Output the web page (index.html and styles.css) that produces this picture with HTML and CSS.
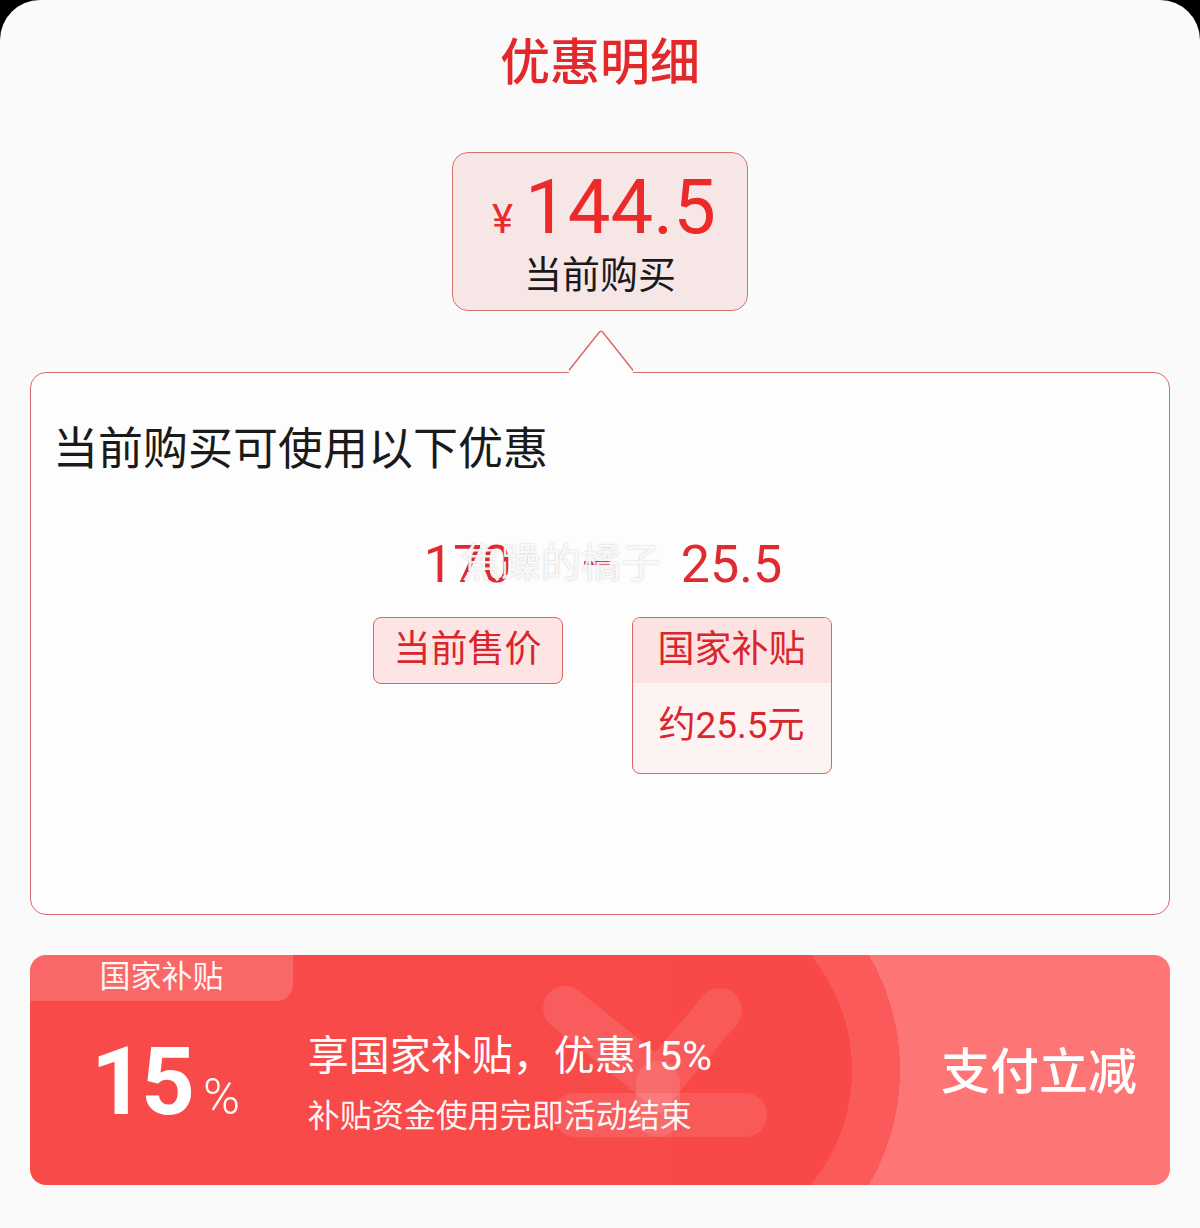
FILE: index.html
```html
<!DOCTYPE html>
<html lang="zh-CN">
<head>
    <meta charset="UTF-8">
    <meta name="viewport" content="width=device-width, initial-scale=1.0">
    <title>优惠明细</title>
    <link rel="stylesheet" href="styles.css">
</head>
<body>

    <div class="sheet">
        <h1 class="title">优惠明细</h1>

        <div class="price-box">
            <div class="price"><span class="yen">¥</span><span class="amount">144.5</span></div>
            <div class="price-label">当前购买</div>
        </div>

        <div class="detail-card">
            <svg class="pointer" width="64" height="46" viewBox="0 0 64 46">
                <path d="M0 42 L30 2.5 Q32 0 34 2.5 L64 42 L64 45 L0 45 Z" fill="#fdfdfd"/>
                <path d="M-2 42.75 L30 2.5 Q32 0 34 2.5 L66 42.75" fill="none" stroke="#d86c6c" stroke-width="1.5"/>
            </svg>

            <h2 class="detail-title">当前购买可使用以下优惠</h2>

            <div class="calc-row">
                <div class="calc-col">
                    <div class="calc-num">170</div>
                    <div class="tag">当前售价</div>
                </div>
                <div class="calc-op">–</div>
                <div class="calc-col">
                    <div class="calc-num">25.5</div>
                    <div class="tag tag-tall">
                        <div class="tag-head">国家补贴</div>
                        <div class="tag-body">约25.5元</div>
                    </div>
                </div>
                <div class="watermark">焦躁的橘子</div>
            </div>
        </div>

        <div class="subsidy-banner">
            <div class="banner-tag">国家补贴</div>
            <svg class="banner-yen" width="760" height="230" viewBox="0 0 760 230">
                <g stroke="rgba(255,255,255,0.1)" stroke-width="44" stroke-linecap="round" fill="none">
                    <path d="M535 53 L628 128 L690 55"/>
                    <path d="M545 160 L715 160"/>
                    <path d="M628 128 L628 160"/>
                </g>
            </svg>

            <div class="banner-rate"><span class="rate-num">15</span><span class="rate-pct">%</span></div>
            <div class="banner-text">
                <div class="banner-main">享国家补贴，优惠15%</div>
                <div class="banner-sub">补贴资金使用完即活动结束</div>
            </div>
            <div class="banner-action">支付立减</div>
        </div>
    </div>

</body>
</html>
```

FILE: styles.css
```css
body {
    margin: 0;
    padding: 0;
    background-color: #000;
    font-family: Roboto, "Noto Sans CJK SC", sans-serif;
}

.sheet {
    background-color: #fafafa;
    border-radius: 40px 40px 0 0;
    min-height: 1228px;
    padding: 37px 30px 0;
    box-sizing: border-box;
}

.title {
    margin: 0;
    text-align: center;
    font-size: 50px;
    line-height: 52px;
    font-weight: 500;
    color: #e2282b;
}

.price-box {
    width: 296px;
    height: 159px;
    margin: 63px auto 0;
    box-sizing: border-box;
    border: 1.5px solid #d8706f;
    border-radius: 16px;
    background-color: #f7e6e6;
    display: flex;
    flex-direction: column;
    align-items: center;
    padding-top: 16px;
}

.price {
    display: flex;
    align-items: baseline;
    color: #ec2a2a;
    line-height: 76px;
    height: 76px;
    margin-left: 8px;
}

.yen {
    font-size: 40px;
    margin-right: 12px;
}

.amount {
    font-size: 76px;
}

.price-label {
    margin-top: 11px;
    font-size: 38px;
    line-height: 38px;
    color: #1a1a1a;
}

.detail-card {
    position: relative;
    margin-top: 61px;
    height: 543px;
    box-sizing: border-box;
    border: 1.5px solid #d86c6c;
    border-radius: 16px;
    background-color: #fdfdfd;
    padding: 54px 22px 0;
}

.pointer {
    position: absolute;
    top: -43.5px;
    left: 537.5px;
}

.detail-title {
    margin: 0;
    font-size: 45px;
    line-height: 45px;
    font-weight: 400;
    color: #1a1a1a;
}

.calc-row {
    position: relative;
    display: flex;
    justify-content: center;
    align-items: flex-start;
    margin-top: 67px;
    padding-left: 4px;
}

.calc-col {
    display: flex;
    flex-direction: column;
    align-items: center;
}

.calc-num {
    font-size: 52px;
    line-height: 52px;
    color: #df2a30;
}

.calc-op {
    width: 69px;
    text-align: center;
    font-size: 52px;
    line-height: 52px;
    color: #df2a30;
}

.tag {
    margin-top: 26px;
    width: 190px;
    height: 67px;
    box-sizing: border-box;
    border: 1.5px solid #d86565;
    border-radius: 8px;
    background-color: #fde5e5;
    color: #d9262d;
    font-size: 37px;
    line-height: 64px;
    text-align: center;
}

.tag-tall {
    width: 200px;
    height: 157px;
    line-height: normal;
    overflow: hidden;
    background-color: #fdf3f3;
}

.tag-head {
    height: 65px;
    line-height: 64px;
    background-color: #fde2e2;
}

.tag-body {
    height: 89px;
    line-height: 86px;
}

.watermark {
    position: absolute;
    left: 408px;
    top: -1px;
    font-size: 40px;
    line-height: 52px;
    color: rgba(255, 255, 255, 0.9);
    text-shadow: 0 0 2px rgba(90, 90, 90, 0.35);
    pointer-events: none;
}

.subsidy-banner {
    position: relative;
    overflow: hidden;
    margin-top: 40px;
    height: 230px;
    border-radius: 16px;
    display: flex;
    align-items: center;
    color: #fff;
    background:
        linear-gradient(to right, #f94a4a 642px, transparent 642px),
        radial-gradient(circle at 642px 50%, #f84848 180px, #fb5a5a 180px 228px, transparent 228px),
        #fe7575;
}

.banner-tag {
    position: absolute;
    top: 0;
    left: 0;
    width: 263px;
    height: 46px;
    border-radius: 0 0 16px 0;
    background-color: rgba(255, 255, 255, 0.16);
    font-size: 31px;
    line-height: 44px;
    text-align: center;
    color: rgba(255, 255, 255, 0.94);
}

.banner-yen {
    position: absolute;
    top: 0;
    left: 0;
}

.banner-rate {
    position: relative;
    display: flex;
    align-items: baseline;
    margin-left: 61px;
    margin-top: 38px;
    line-height: 96px;
}

.rate-num {
    font-size: 94px;
    font-weight: 700;
    letter-spacing: -4px;
}

.rate-pct {
    font-size: 50px;
    font-weight: 300;
    margin-left: 12px;
}

.banner-text {
    position: relative;
    margin-left: 68px;
    margin-top: 28px;
}

.banner-main {
    font-size: 41px;
    line-height: 44px;
}

.banner-sub {
    margin-top: 20px;
    font-size: 32px;
    line-height: 36px;
    color: rgba(255, 255, 255, 0.95);
}

.banner-action {
    position: relative;
    margin-left: auto;
    margin-right: 33px;
    margin-top: 6px;
    font-size: 49px;
    line-height: 50px;
    font-weight: 500;
}
```
